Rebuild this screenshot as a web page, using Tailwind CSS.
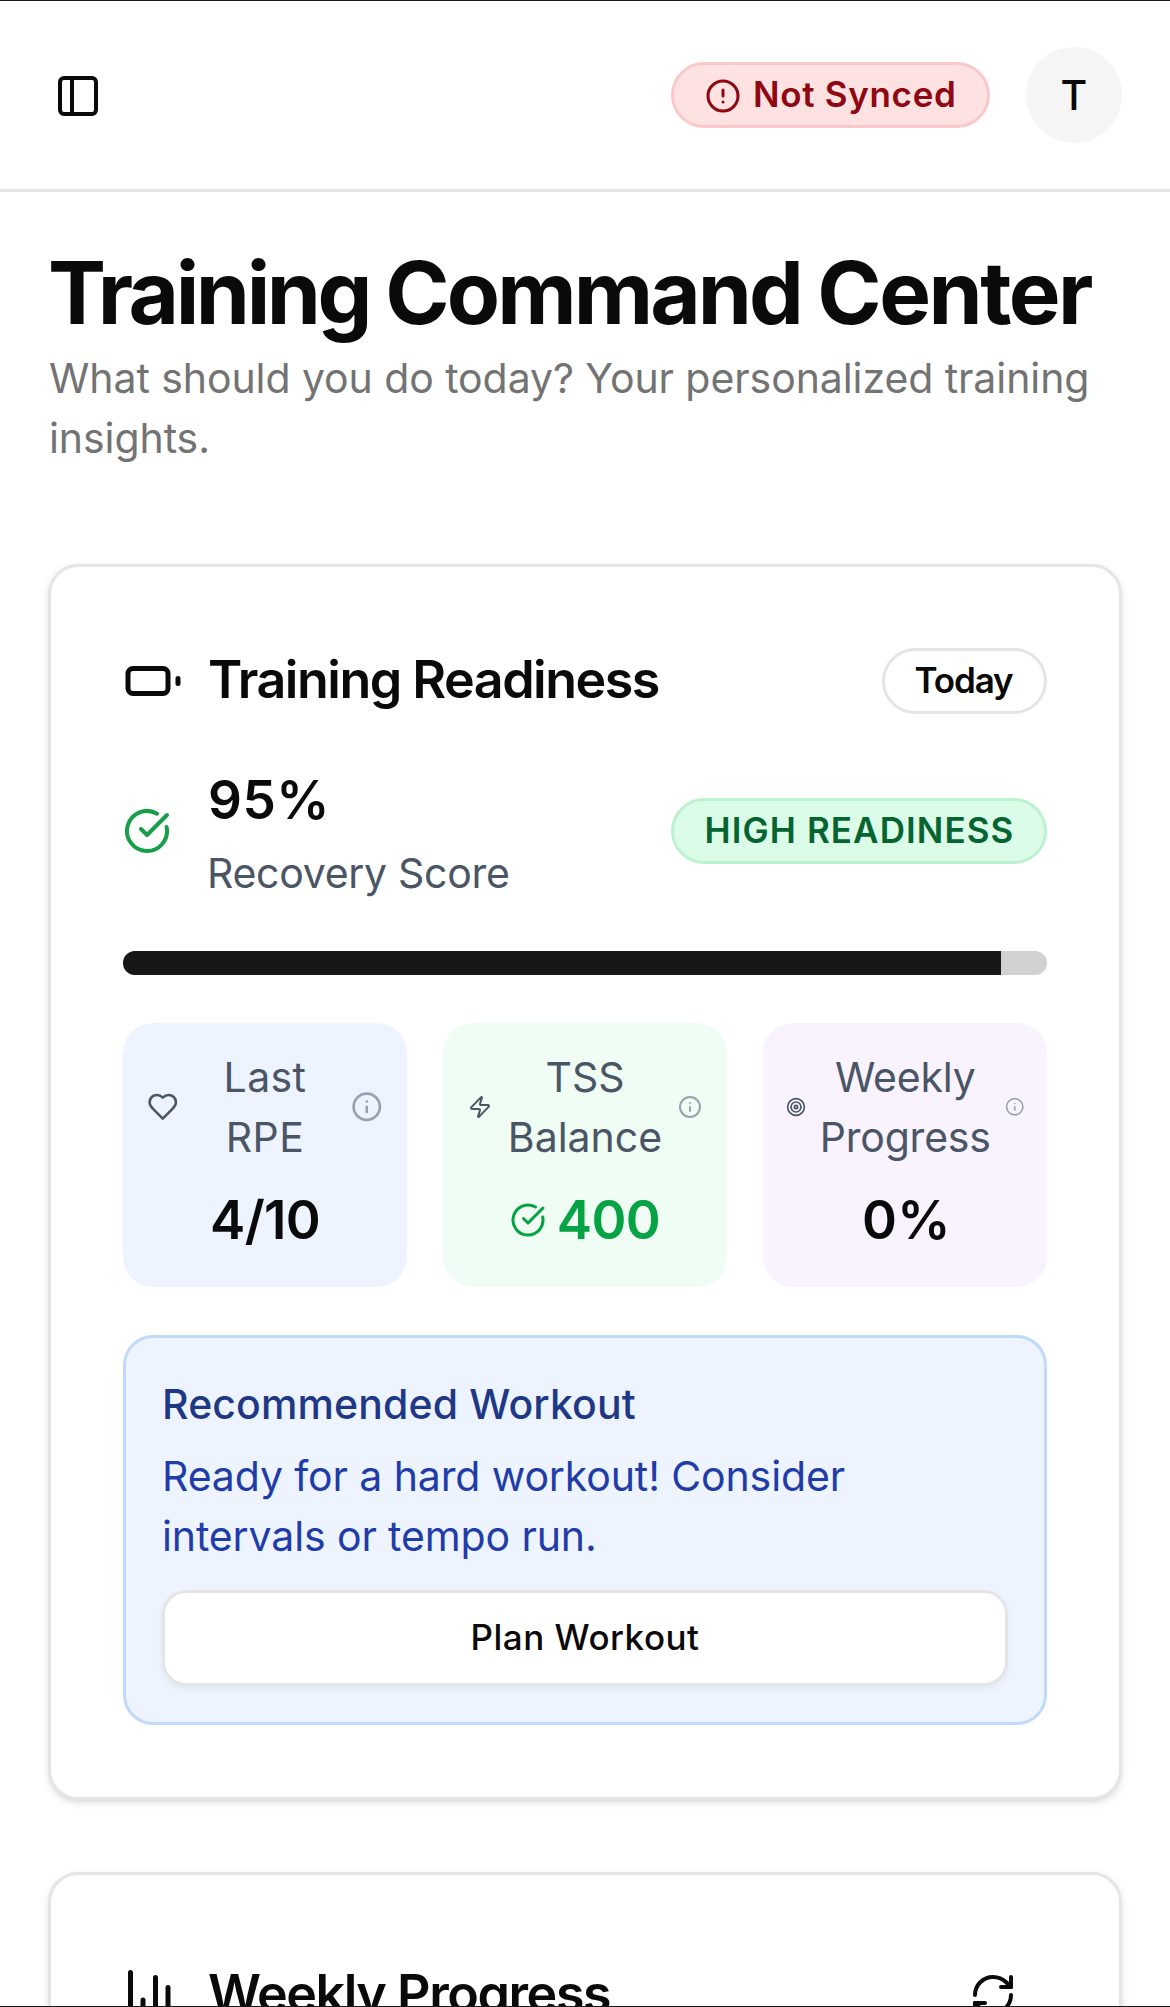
<!DOCTYPE html>
<html lang="en">
<head>
<meta charset="utf-8">
<meta name="viewport" content="width=device-width, initial-scale=1">
<title>Training Command Center</title>
<script src="https://cdn.jsdelivr.net/npm/@tailwindcss/browser@4"></script>
</head>
<body class="h-[2007px] overflow-hidden bg-white font-['Inter',sans-serif] text-[#0a0a0a]">
<div class="flex h-[2007px] flex-col overflow-hidden border-y border-[#18181b]">

  <!-- Top bar -->
  <header class="flex h-[191px] shrink-0 items-center justify-between border-b-3 border-[#e5e5e5] pr-12 pl-[54px]">
    <button class="flex size-12 items-center justify-center pt-0.5" aria-label="Toggle sidebar">
      <svg class="size-12 shrink-0" viewBox="0 0 24 24" fill="none" stroke="currentColor" stroke-width="2" stroke-linecap="round" stroke-linejoin="round"><rect width="18" height="18" x="3" y="3" rx="2"/><path d="M9 3v18"/></svg>
    </button>
    <div class="flex items-center gap-9">
      <span class="flex h-[66px] w-[319px] items-center gap-3 rounded-full border-3 border-[#fac8c9] bg-[#fee1e1] pl-[31px] text-[35px] leading-[48px] font-semibold tracking-[0.68px] whitespace-nowrap text-[#8f0712]">
        <svg class="mt-0.5 size-9 shrink-0" viewBox="0 0 24 24" fill="none" stroke="currentColor" stroke-width="2" stroke-linecap="round" stroke-linejoin="round"><circle cx="12" cy="12" r="10"/><path d="M12 8v4"/><path d="M12 16h.01"/></svg>
        <span class="-mt-0.5">Not Synced</span>
      </span>
      <span class="flex size-24 items-center justify-center rounded-full bg-[#f5f5f5] text-[41px] leading-[60px] font-medium">T</span>
    </div>
  </header>

  <main class="flex flex-col px-12 pt-12">
    <h1 class="mb-0.5 text-[87px] leading-[106px] font-bold tracking-[-2.9px] whitespace-nowrap [word-spacing:-1.500px]"><span class="tracking-[-3.400px]">Training</span> Command <span class="tracking-[-2.500px]">Center</span></h1>
    <p class="ml-px text-[41px] leading-[60px] tracking-[-0.08px] text-[#737373]">What should you do today? Your personalized training insights.</p>

    <div class="mt-24 flex flex-col gap-[72px]">

      <!-- Training readiness -->
      <section class="rounded-[30px] border-3 border-[#e5e5e5] bg-white p-[72px] shadow-[0_3px_9px_rgba(0,0,0,0.1),0_3px_6px_-3px_rgba(0,0,0,0.1)]">
        <div class="flex h-21 items-center justify-between">
          <h2 class="flex items-center gap-[25px] text-[52px] leading-[84px] font-semibold tracking-[-1.51px]">
            <svg class="size-15" viewBox="0 0 24 24" fill="none" stroke="currentColor" stroke-width="2" stroke-linecap="round" stroke-linejoin="round"><path d="M22 11v2"/><rect x="2" y="7" width="16" height="10" rx="2"/></svg>
            <span class="-mt-0.5">Training Readiness</span>
          </h2>
          <span class="flex h-[66px] w-[165px] items-center justify-center rounded-full border-3 border-[#e5e5e5] pr-0.5 pb-0.5 text-[35px] leading-[48px] font-semibold tracking-[-1.08px]">Today</span>
        </div>

        <div class="mt-9 flex items-center justify-between">
          <div class="flex items-center gap-9">
            <svg class="size-12 text-[#169f48]" viewBox="0 0 24 24" fill="none" stroke="currentColor" stroke-width="2" stroke-linecap="round" stroke-linejoin="round"><path d="M21.801 10A10 10 0 1 1 17 3.335"/><path d="m9 11 3 3L22 4"/></svg>
            <div>
              <p class="-mt-px mb-px ml-px text-[53px] leading-[84px] font-semibold tracking-[0.5px]">95%</p>
              <p class="text-[41px] leading-[60px] tracking-[-0.29px] text-[#4a5565]">Recovery Score</p>
            </div>
          </div>
          <span class="flex h-[66px] w-[376px] items-center justify-center rounded-full border-3 border-[#bcf2cf] bg-[#dbfce6] pb-0.5 pl-px text-[35px] leading-[48px] font-semibold tracking-[1.08px] text-[#066432]">HIGH READINESS</span>
        </div>

        <div class="mt-12 h-6 overflow-hidden rounded-full bg-[#d1d1d1]">
          <div class="h-full bg-[#171717]" style="width:95%"></div>
        </div>

        <div class="mt-12 grid grid-cols-3 gap-9 text-center">
          <div class="rounded-[30px] bg-[#eef4ff] p-6">
            <div class="flex items-center justify-between text-[41px] leading-[60px] text-[#4a5565]">
              <svg class="size-[31.5px] shrink-0" viewBox="0 0 24 24" fill="none" stroke="currentColor" stroke-width="2" stroke-linecap="round" stroke-linejoin="round"><path d="M19 14c1.490-1.460 3-3.210 3-5.500A5.500 5.500 0 0 0 16.500 3c-1.760 0-3 .5-4.500 2-1.500-1.500-2.740-2-4.500-2A5.500 5.500 0 0 0 2 8.500c0 2.300 1.500 4.050 3 5.500l7 7Z"/></svg>
              <span class="tracking-[0.4px]">Last<br>RPE</span>
              <svg class="size-[31.5px] shrink-0 text-[#99a1af]" viewBox="0 0 24 24" fill="none" stroke="currentColor" stroke-width="2" stroke-linecap="round" stroke-linejoin="round"><circle cx="12" cy="12" r="10"/><path d="M12 16v-4"/><path d="M12 8h.01"/></svg>
            </div>
            <p class="mt-[11px] mb-px text-[53px] leading-[84px] font-semibold tracking-[-0.75px]">4/10</p>
          </div>

          <div class="rounded-[30px] bg-[#effdf4] p-6">
            <div class="flex items-center justify-between px-px text-[41px] leading-[60px] text-[#4a5565]">
              <svg class="size-6 shrink-0" viewBox="0 0 24 24" fill="none" stroke="currentColor" stroke-width="2" stroke-linecap="round" stroke-linejoin="round"><path d="M4 14a1 1 0 0 1-.78-1.630l9.900-10.200a.5.5 0 0 1 .86.460l-1.920 6.020A1 1 0 0 0 13 10h7a1 1 0 0 1 .78 1.630l-9.900 10.200a.5.5 0 0 1-.86-.460l1.920-6.020A1 1 0 0 0 11 14z"/></svg>
              <span>TSS<br>Balance</span>
              <svg class="size-6 shrink-0 text-[#99a1af]" viewBox="0 0 24 24" fill="none" stroke="currentColor" stroke-width="2" stroke-linecap="round" stroke-linejoin="round"><circle cx="12" cy="12" r="10"/><path d="M12 16v-4"/><path d="M12 8h.01"/></svg>
            </div>
            <p class="mt-[11px] mb-px flex items-center justify-center gap-[11px] text-[53px] leading-[84px] font-semibold tracking-[-0.63px] text-[#06a344]">
              <svg class="size-9" viewBox="0 0 24 24" fill="none" stroke="currentColor" stroke-width="2" stroke-linecap="round" stroke-linejoin="round"><path d="M21.801 10A10 10 0 1 1 17 3.335"/><path d="m9 11 3 3L22 4"/></svg>
              400
            </p>
          </div>

          <div class="rounded-[30px] bg-[#f9f3ff] py-6 pr-[22.500px] pl-[22.500px]">
            <div class="flex items-center justify-between text-[41px] leading-[60px] text-[#4a5565]">
              <svg class="size-5 shrink-0" viewBox="0 0 24 24" fill="none" stroke="currentColor" stroke-width="2" stroke-linecap="round" stroke-linejoin="round"><circle cx="12" cy="12" r="10"/><circle cx="12" cy="12" r="6"/><circle cx="12" cy="12" r="2"/></svg>
              <span class="tracking-[-0.2px]">Weekly<br>Progress</span>
              <svg class="size-[19.500px] shrink-0 text-[#99a1af]" viewBox="0 0 24 24" fill="none" stroke="currentColor" stroke-width="2" stroke-linecap="round" stroke-linejoin="round"><circle cx="12" cy="12" r="10"/><path d="M12 16v-4"/><path d="M12 8h.01"/></svg>
            </div>
            <p class="mt-[11px] mb-px pl-[3px] text-[53px] leading-[84px] font-semibold tracking-[0.5px]">0%</p>
          </div>
        </div>

        <div class="mt-12 rounded-[30px] border-3 border-[#c1daf8] bg-[#eef4ff] p-9">
          <h3 class="text-[41px] leading-[60px] font-medium tracking-[0.12px] text-[#1f3886]">Recommended Workout</h3>
          <p class="mt-3 text-[41px] leading-[60px] tracking-[-0.12px] text-[#1f3ca8]">Ready for a hard workout! Consider intervals or tempo run.</p>
          <button class="mt-6 flex h-24 w-full items-center justify-center rounded-[24px] border-3 border-[#e5e5e5] bg-white pb-0.5 text-[35px] leading-[60px] font-medium tracking-[0.5px] shadow-[0_3px_6px_rgba(0,0,0,0.05)]">Plan Workout</button>
        </div>
      </section>

      <!-- Weekly progress -->
      <section class="rounded-[30px] border-3 border-[#e5e5e5] bg-white p-[72px] shadow-[0_3px_9px_rgba(0,0,0,0.1),0_3px_6px_-3px_rgba(0,0,0,0.1)]">
        <div class="flex h-24 items-center justify-between">
          <h2 class="flex items-center gap-[25px] text-[52px] leading-[84px] font-semibold tracking-[-1.45px]">
            <svg class="size-15" viewBox="0 0 24 24" fill="none" stroke="currentColor" stroke-width="2" stroke-linecap="round" stroke-linejoin="round"><path d="M3 3v16a2 2 0 0 0 2 2h16"/><path d="M18 17V9"/><path d="M13 17V5"/><path d="M8 17v-3"/></svg>
            <span class="-mt-0.5">Weekly Progress</span>
          </h2>
          <button class="flex h-24 items-center px-[30px]" aria-label="Refresh">
            <svg class="size-12" viewBox="0 0 24 24" fill="none" stroke="currentColor" stroke-width="2" stroke-linecap="round" stroke-linejoin="round"><path d="M3 12a9 9 0 0 1 9-9 9.750 9.750 0 0 1 6.740 2.740L21 8"/><path d="M21 3v5h-5"/><path d="M21 12a9 9 0 0 1-9 9 9.750 9.750 0 0 1-6.740-2.740L3 16"/><path d="M8 16H3v5"/></svg>
          </button>
        </div>
      </section>

    </div>
  </main>
</div>
</body>
</html>
